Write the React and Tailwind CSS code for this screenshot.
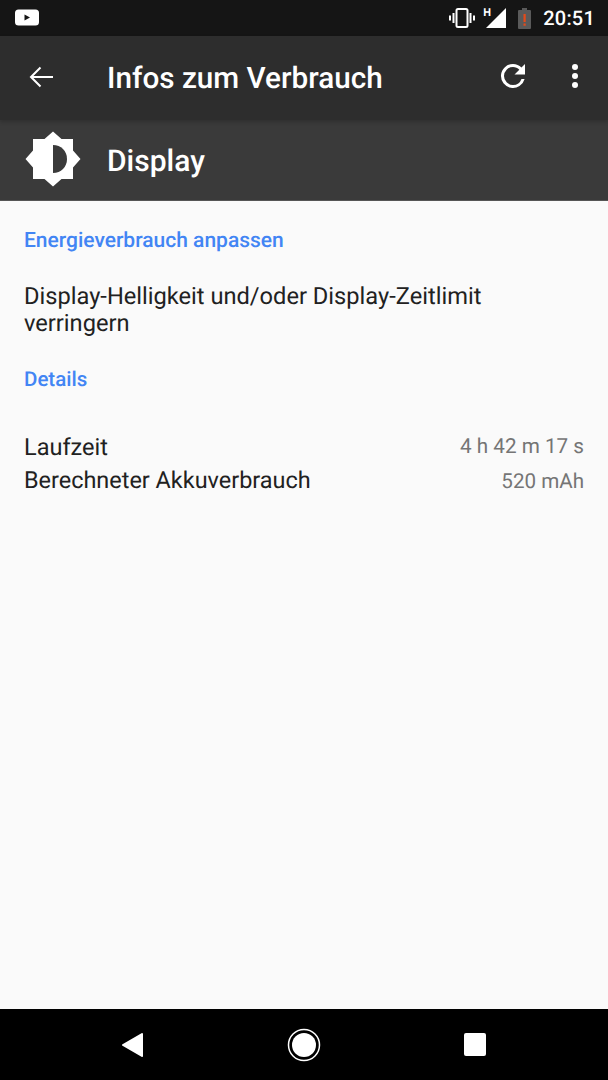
export default function App() {
  return (
    <div className="w-[608px] h-[1080px] flex flex-col bg-[#fafafa] font-['Roboto',sans-serif] overflow-hidden [text-rendering:geometricPrecision]">
      <div className="h-9 shrink-0 bg-[#151515] flex items-center pl-[15px] pr-[13px]">
        <svg width="24" height="17" viewBox="0 0 24 17" className="mt-[-1px]">
          <rect x="0" y="0.5" width="24" height="16" rx="3.5" fill="#fff" />
          <path d="M9.500 5.500v6l5.500-3z" fill="#151515" />
        </svg>
        <div className="flex-1" />
        <svg width="28" height="20" viewBox="0 0 28 20" className="mr-[10px]">
          <rect x="8.500" y="1" width="11" height="18" rx="1.500" fill="none" stroke="#fff" strokeWidth="2" />
          <path d="M4.500 5h2v10h-2zM21.500 5h2v10h-2zM1 7.500h2v5H1zM25 7.500h2v5h-2z" fill="#fff" />
        </svg>
        <div className="relative w-[20px] h-[20px] mr-[12px] mt-[-1px]">
          <span className="absolute left-[-3px] top-[-1px] text-[11px] leading-[11px] font-bold text-white">H</span>
          <svg width="20" height="20" viewBox="0 0 20 20" className="absolute left-0 top-0">
            <path d="M0 20L20 0v20z" fill="#fff" />
          </svg>
        </div>
        <svg width="13" height="21" viewBox="0 0 13 21" className="mr-[12px]">
          <path d="M4 0h5v2h3a1 1 0 0 1 1 1v17a1 1 0 0 1-1 1H1a1 1 0 0 1-1-1V3a1 1 0 0 1 1-1h3z" fill="#5a5a5a" />
          <path d="M5.500 6h2.200v8H5.500zM5.500 15.500h2.200v2.200H5.500z" fill="#e64a19" />
        </svg>
        <span className="text-[20px] leading-[24px] font-medium text-white tracking-[0.2px]">20:51</span>
      </div>

      <div className="h-[84px] shrink-0 bg-[#2d2d2d] flex items-center pl-[28px] pr-[30px] shadow-[0_2px_4px_rgba(0,0,0,0.2)] relative z-10">
        <svg width="26" height="24" viewBox="0 0 26 24" className="mt-[-2px]">
          <path d="M25 12H3M12.500 2.500L3 12l9.500 9.500" fill="none" stroke="#fff" strokeWidth="2" />
        </svg>
        <span className="ml-[53px] mt-[2px] text-[29.700px] leading-[36px] font-medium text-white flex-1">Infos zum Verbrauch</span>
        <svg width="36" height="36" viewBox="0 0 24 24" className="mr-[41px] mt-[-4px]">
          <path d="M17.650 6.350A7.958 7.958 0 0 0 12 4a8 8 0 1 0 7.730 10h-2.080A5.990 5.990 0 0 1 12 18a6 6 0 1 1 0-12c1.660 0 3.140.690 4.220 1.780L13 11h7V4z" fill="#fff" />
        </svg>
        <div className="flex flex-col gap-[3px] mt-[-4px]">
          <div className="w-[6px] h-[6px] rounded-full bg-white" />
          <div className="w-[6px] h-[6px] rounded-full bg-white" />
          <div className="w-[6px] h-[6px] rounded-full bg-white" />
        </div>
      </div>

      <div className="h-[81px] shrink-0 bg-[#3a3a3a] flex items-center pl-[24px] border-b border-[#555]">
        <svg width="58" height="58" viewBox="0 0 58 58" className="mt-[-2px]">
          <path d="M29 1.500L37.500 9H49V20.500L56.500 29L49 37.500V49H37.500L29 56.500L20.500 49H9V37.500L1.500 29L9 20.500V9H20.500Z" fill="#fff" />
          <path d="M29 15c8 0 14 6 14 14s-6 14-14 14z" fill="#3a3a3a" />
        </svg>
        <span className="ml-[25px] mt-[4px] text-[30px] leading-[36px] font-medium text-white">Display</span>
      </div>

      <div className="flex-1 flex flex-col px-[24px] pt-[26px]">
        <div className="text-[21px] leading-[28px] font-medium text-[#4285f4]">Energieverbrauch anpassen</div>
        <div className="mt-[28px] text-[23.650px] leading-[27px] text-[#212121] w-[480px]">Display-Helligkeit und/oder Display-Zeitlimit verringern</div>
        <div className="mt-[29px] text-[20.500px] leading-[28px] font-medium text-[#4285f4]">Details</div>
        <div className="mt-[37px] flex justify-between items-center h-[34px]">
          <span className="text-[23.500px] leading-[33px] text-[#212121] mt-[-2px]">Laufzeit</span>
          <span className="text-[20.700px] text-[#757575]">4 h 42 m 17 s</span>
        </div>
        <div className="flex justify-between items-center h-[33px]">
          <span className="text-[23.450px] leading-[33px] text-[#212121] mt-[-2px]">Berechneter Akkuverbrauch</span>
          <span className="text-[20.600px] text-[#757575] mt-[2px]">520 mAh</span>
        </div>
      </div>

      <div className="h-[71px] shrink-0 bg-black flex items-center">
        <svg width="24" height="26" viewBox="0 0 24 26" className="ml-[121px]">
          <path d="M21 2L2 13l19 11z" fill="#fff" stroke="#fff" strokeWidth="2" strokeLinejoin="round" />
        </svg>
        <svg width="34" height="34" viewBox="0 0 34 34" className="ml-[142px]">
          <circle cx="17" cy="17" r="15.500" fill="none" stroke="#fff" strokeWidth="1.500" />
          <circle cx="17" cy="17" r="12" fill="#fff" />
        </svg>
        <div className="ml-[143px] w-[22px] h-[23px] rounded-[2px] bg-white" />
      </div>
    </div>
  );
}
